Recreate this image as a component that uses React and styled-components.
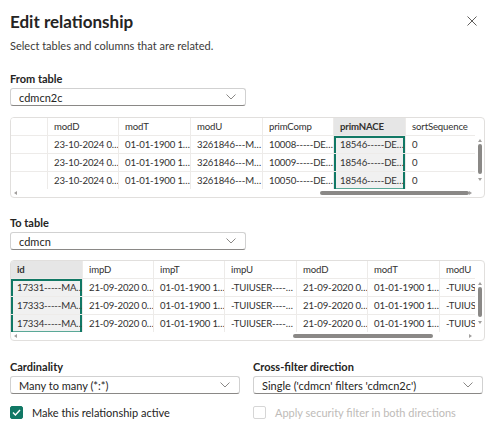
import React from "react";
import styled, { createGlobalStyle } from "styled-components";

const GlobalStyle = createGlobalStyle`
  html, body {
    margin: 0;
    padding: 0;
    background: #ffffff;
  }
  body {
    font-family: "Lato", "Noto Sans", sans-serif;
    color: #252423;
  }
`;

const GREEN = "#117865";

const Dialog = styled.div`
  width: 491px;
  height: 429px;
  box-sizing: border-box;
  padding: 9px 6px 0 10px;
  display: flex;
  flex-direction: column;
`;

const Header = styled.div`
  display: flex;
  align-items: center;
  justify-content: space-between;
  height: 24px;
`;

const Title = styled.h1`
  margin: 0;
  font-size: 17px;
  font-weight: 700;
  color: #252423;
`;

const CloseButton = styled.button`
  border: none;
  background: none;
  padding: 0;
  margin-right: 7px;
  width: 12px;
  height: 12px;
  display: flex;
  align-items: center;
  justify-content: center;
`;

const Subtitle = styled.p`
  margin: 6px 0 0;
  font-size: 11px;
  color: #3b3a39;
`;

const Label = styled.div`
  margin-top: ${(p) => p.$top || 0}px;
  font-size: 11px;
  font-weight: 700;
  color: #252423;
  height: 14px;
  line-height: 14px;
`;

const SelectBox = styled.div`
  margin-top: 2px;
  width: ${(p) => p.$width}px;
  height: 18px;
  box-sizing: border-box;
  border: 1px solid #d1d1d1;
  border-bottom-color: #8a8886;
  border-radius: 3px;
  display: flex;
  align-items: center;
  justify-content: space-between;
  padding: 0 9px 0 8px;
  font-size: 11px;
  color: #252423;
  background: #fff;
`;

const Frame = styled.div`
  margin-top: ${(p) => p.$top}px;
  height: 81px;
  box-sizing: border-box;
  border: 1px solid #e1dfdd;
  border-radius: 4px;
  display: grid;
  grid-template-columns: 1fr 9px;
  grid-template-rows: 1fr 8px;
  overflow: hidden;
`;

const Viewport = styled.div`
  overflow: hidden;
`;

const Row = styled.div`
  display: flex;
  height: 18px;
  border-bottom: 1px solid #edebe9;
  box-sizing: border-box;
  &:last-child {
    border-bottom: none;
  }
`;

const Cell = styled.div`
  flex: none;
  width: ${(p) => p.$w}px;
  box-sizing: border-box;
  padding: 0 4px 0 6px;
  border-right: 1px solid #edebe9;
  font-size: 9.6px;
  letter-spacing: -0.15px;
  line-height: 17px;
  white-space: nowrap;
  overflow: hidden;
  color: #323130;
  font-weight: ${(p) => (p.$head && p.$sel ? 700 : 400)};
  background: ${(p) => (p.$sel ? (p.$head ? "#e6e6e6" : "#f0f0f0") : "#fff")};
  box-shadow: ${(p) =>
    p.$sel && !p.$head
      ? [
          `inset 2px 0 0 ${GREEN}`,
          `inset -2px 0 0 ${GREEN}`,
          p.$first ? `inset 0 2px 0 ${GREEN}` : null,
          p.$last ? `inset 0 -2px 0 #5aa897` : null,
        ]
          .filter(Boolean)
          .join(", ")
      : "none"};
`;

const VScroll = styled.div`
  display: flex;
  flex-direction: column;
  align-items: center;
  padding-top: 21px;
`;

const VThumb = styled.div`
  width: 4px;
  height: ${(p) => p.$h}px;
  margin: ${(p) => p.$m}px 0 0;
  border-radius: 2px;
  background: #8a8886;
`;

const HScroll = styled.div`
  display: flex;
  align-items: center;
  padding: 0 3px;
`;

const HTrack = styled.div`
  flex: 1;
  display: flex;
  align-items: center;
  height: 8px;
`;

const HThumb = styled.div`
  height: 4px;
  border-radius: 2px;
  background: #8a8886;
`;

const Arrow = styled.span`
  width: 0;
  height: 0;
  flex: none;
  border: 2px solid transparent;
  margin-top: ${(p) => p.$gap || 0}px;
  ${(p) =>
    p.$dir === "up"
      ? "border-bottom: 3px solid #a19f9d; border-top: none;"
      : p.$dir === "down"
      ? "border-top: 3px solid #a19f9d; border-bottom: none;"
      : p.$dir === "left"
      ? "border-right: 3px solid #a19f9d; border-left: none;"
      : "border-left: 3px solid #a19f9d; border-right: none;"}
`;

const Bottom = styled.div`
  margin-top: 19px;
  display: grid;
  grid-template-columns: 230px 230px;
  column-gap: 13px;
`;

const Field = styled.div`
  display: flex;
  flex-direction: column;
`;

const CheckRow = styled.label`
  margin-top: 12px;
  display: flex;
  align-items: center;
  gap: 9px;
  font-size: 11px;
  color: ${(p) => (p.$disabled ? "#bebbb8" : "#252423")};
`;

const Box = styled.span`
  width: 13px;
  height: 13px;
  box-sizing: border-box;
  border-radius: 2px;
  display: flex;
  align-items: center;
  justify-content: center;
  background: ${(p) => (p.$checked ? GREEN : "#fff")};
  border: 1px solid ${(p) => (p.$checked ? GREEN : "#d6d6d6")};
`;

const Chevron = () => (
  <svg width="10" height="6" viewBox="0 0 10 6">
    <path d="M0.5 0.5 L5 5 L9.5 0.5" fill="none" stroke="#8a8886" strokeWidth="1" />
  </svg>
);

const Select = ({ value, width }) => (
  <SelectBox $width={width}>
    <span>{value}</span>
    <Chevron />
  </SelectBox>
);

const DataGrid = ({ columns, rows, selected, top, thumb, vThumb }) => (
  <Frame $top={top}>
    <Viewport>
      <Row>
        {columns.map((c, i) => (
          <Cell key={i} $w={c.w} $head $sel={i === selected}>
            {c.name}
          </Cell>
        ))}
      </Row>
      {rows.map((r, ri) => (
        <Row key={ri}>
          {r.map((v, i) => (
            <Cell
              key={i}
              $w={columns[i].w}
              $sel={i === selected}
              $first={ri === 0}
              $last={ri === rows.length - 1}
            >
              {v}
            </Cell>
          ))}
        </Row>
      ))}
    </Viewport>
    <VScroll>
      <Arrow $dir="up" />
      <VThumb $m={vThumb.m} $h={vThumb.h} />
      <Arrow $dir="down" $gap={4} />
    </VScroll>
    <HScroll>
      <Arrow $dir="left" />
      <HTrack>
        <HThumb style={{ marginLeft: `${thumb[0]}%`, width: `${thumb[1] - thumb[0]}%` }} />
      </HTrack>
      <Arrow $dir="right" />
    </HScroll>
    <div />
  </Frame>
);

const fromColumns = [
  { name: "", w: 37 },
  { name: "modD", w: 71 },
  { name: "modT", w: 72 },
  { name: "modU", w: 72 },
  { name: "primComp", w: 71 },
  { name: "primNACE", w: 72 },
  { name: "sortSequence", w: 71 },
];

const fromRows = [
  ["", "23-10-2024 0…", "01-01-1900 1…", "3261846---M…", "10008-----DE…", "18546-----DE…", "0"],
  ["", "23-10-2024 0…", "01-01-1900 1…", "3261846---M…", "10009-----DE…", "18546-----DE…", "0"],
  ["", "23-10-2024 0…", "01-01-1900 1…", "3261846---M…", "10050-----DE…", "18546-----DE…", "0"],
];

const toColumns = [
  { name: "id", w: 72 },
  { name: "impD", w: 71 },
  { name: "impT", w: 71 },
  { name: "impU", w: 72 },
  { name: "modD", w: 71 },
  { name: "modT", w: 72 },
  { name: "modU", w: 72 },
];

const toRows = [
  ["17331-----MA…", "21-09-2020 0…", "01-01-1900 1…", "-TUIUSER----…", "21-09-2020 0…", "01-01-1900 1…", "-TUIUSER"],
  ["17333-----MA…", "21-09-2020 0…", "01-01-1900 1…", "-TUIUSER----…", "21-09-2020 0…", "01-01-1900 1…", "-TUIUSER"],
  ["17334-----MA…", "21-09-2020 0…", "01-01-1900 1…", "-TUIUSER----…", "21-09-2020 0…", "01-01-1900 1…", "-TUIUSER"],
];

const App = () => {
  return (
    <>
      <GlobalStyle />
      <Dialog>
        <Header>
          <Title>Edit relationship</Title>
          <CloseButton aria-label="Close">
            <svg width="10" height="10" viewBox="0 0 10 10">
              <path d="M0.5 0.5 L9.5 9.5 M9.5 0.5 L0.5 9.5" stroke="#605e5c" strokeWidth="1" />
            </svg>
          </CloseButton>
        </Header>
        <Subtitle>Select tables and columns that are related.</Subtitle>

        <Label $top={20}>From table</Label>
        <Select value="cdmcn2c" width={236} />
        <DataGrid
          top={11}
          columns={fromColumns}
          rows={fromRows}
          selected={5}
          thumb={[67, 100]}
          vThumb={{ m: 2, h: 30 }}
        />

        <Label $top={18}>To table</Label>
        <Select value="cdmcn" width={236} />
        <DataGrid
          top={10}
          columns={toColumns}
          rows={toRows}
          selected={0}
          thumb={[61, 92]}
          vThumb={{ m: 2, h: 30 }}
        />

        <Bottom>
          <Field>
            <Label>Cardinality</Label>
            <Select value="Many to many (*:*)" width={230} />
            <CheckRow>
              <Box $checked>
                <svg width="9" height="7" viewBox="0 0 9 7">
                  <path d="M1 3.5 L3.4 6 L8 1" fill="none" stroke="#fff" strokeWidth="1.4" />
                </svg>
              </Box>
              Make this relationship active
            </CheckRow>
          </Field>
          <Field>
            <Label>Cross-filter direction</Label>
            <Select value="Single ('cdmcn' filters 'cdmcn2c')" width={230} />
            <CheckRow $disabled>
              <Box />
              Apply security filter in both directions
            </CheckRow>
          </Field>
        </Bottom>
      </Dialog>
    </>
  );
};

export default App;
